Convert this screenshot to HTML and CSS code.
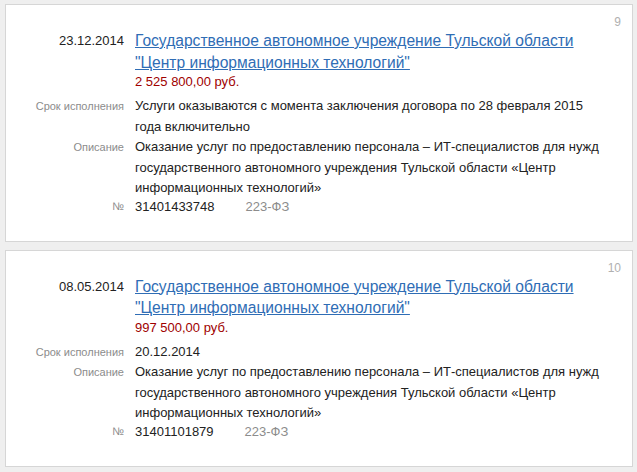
FILE: index.html
```html
<!DOCTYPE html>
<html lang="ru">
<head>
<meta charset="utf-8">
<title>Контракты</title>
<link rel="stylesheet" href="styles.css">
</head>
<body>
<div class="list">
  <div class="card">
    <span class="idx">9</span>
    <div class="row head">
      <div class="label date">23.12.2014</div>
      <div class="value">
        <a class="title" href="#">Государственное автономное учреждение Тульской области "Центр информационных технологий"</a>
        <div class="price">2 525 800,00 руб.</div>
      </div>
    </div>
    <div class="row">
      <div class="label">Срок исполнения</div>
      <div class="value">Услуги оказываются с момента заключения договора по 28 февраля 2015 года включительно</div>
    </div>
    <div class="row">
      <div class="label">Описание</div>
      <div class="value">Оказание услуг по предоставлению персонала – ИТ-специалистов для нужд государственного автономного учреждения Тульской области «Центр информационных технологий»</div>
    </div>
    <div class="row last">
      <div class="label">№</div>
      <div class="value">31401433748<span class="law">223-ФЗ</span></div>
    </div>
  </div>
  <div class="card">
    <span class="idx">10</span>
    <div class="row head">
      <div class="label date">08.05.2014</div>
      <div class="value">
        <a class="title" href="#">Государственное автономное учреждение Тульской области "Центр информационных технологий"</a>
        <div class="price">997 500,00 руб.</div>
      </div>
    </div>
    <div class="row">
      <div class="label">Срок исполнения</div>
      <div class="value">20.12.2014</div>
    </div>
    <div class="row">
      <div class="label">Описание</div>
      <div class="value">Оказание услуг по предоставлению персонала – ИТ-специалистов для нужд государственного автономного учреждения Тульской области «Центр информационных технологий»</div>
    </div>
    <div class="row last">
      <div class="label">№</div>
      <div class="value">31401101879<span class="law">223-ФЗ</span></div>
    </div>
  </div>
</div>
</body>
</html>
```

FILE: styles.css
```css
html, body {
  margin: 0;
  padding: 0;
  background: #efefef;
}
body {
  font-family: "Liberation Sans", Arial, sans-serif;
  font-size: 13px;
  color: #222;
}
.list {
  display: flex;
  flex-direction: column;
  gap: 8px;
  padding: 4px 4px 0 5px;
}
.card {
  position: relative;
  background: #fff;
  border: 1px solid #d6d6d6;
  padding: 26px 26px 25px 0;
}
.idx {
  position: absolute;
  top: 10px;
  right: 11px;
  font-size: 12px;
  color: #b0b0b0;
}
.row {
  display: grid;
  grid-template-columns: 118px 1fr;
  column-gap: 11px;
  line-height: 20.5px;
}
.row.head {
  margin-bottom: 7px;
}
.row.last {
  line-height: 19px;
  margin-top: -2px;
}
.label {
  text-align: right;
  font-size: 11px;
  color: #8c8c8c;
}
.label.date {
  font-size: 13px;
  color: #222;
  line-height: 20.5px;
}
.title {
  font-size: 15.6px;
  line-height: 20.5px;
  color: #2f6db5;
  text-decoration: underline;
}
.price {
  color: #a00000;
  line-height: 15px;
}
.law {
  margin-left: 31px;
  color: #8c8c8c;
}
```
